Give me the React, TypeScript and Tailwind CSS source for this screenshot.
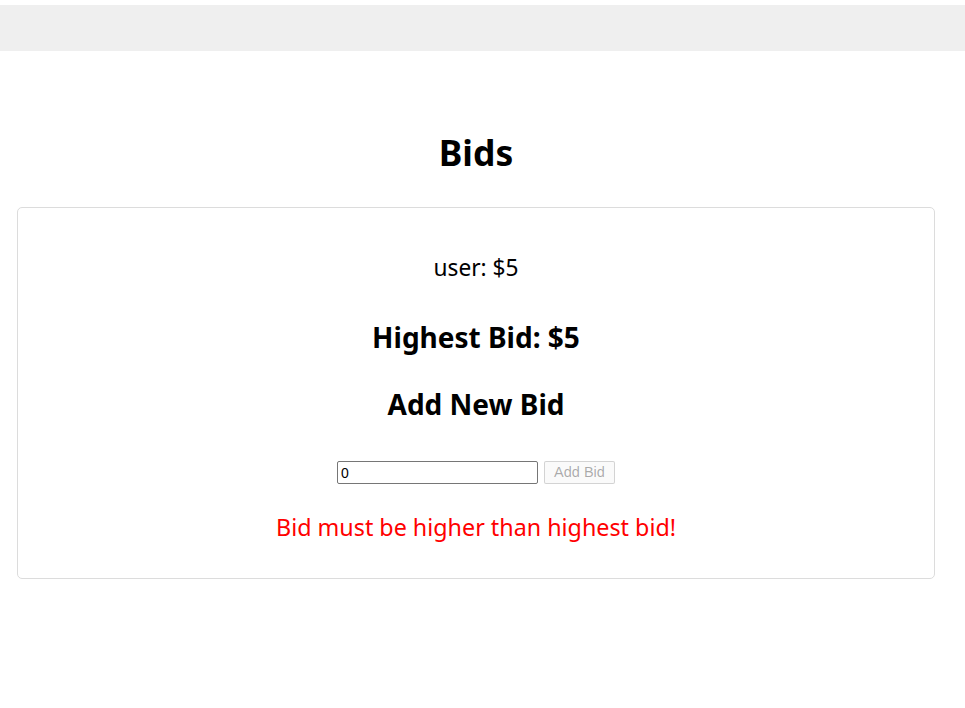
import React from "react";

export default function App() {
  return (
    <div className="min-h-[708px] bg-white pt-[5px] text-black">
      <div className="h-[46px] bg-[#efefef]" />
      <h1 className="mt-[81px] mb-[35px] mr-[13px] text-center text-[35.5px] leading-[40px] font-bold font-['Noto_Sans',sans-serif]">
        Bids
      </h1>
      <div className="ml-[17px] mr-[30px] rounded-[5px] border border-[#dcdcdc] pt-[46px] pb-[37px] text-center font-['Noto_Sans',sans-serif]">
        <p className="text-[22.7px] leading-[28px]">user: $5</p>
        <h2 className="mt-[39px] text-[28px] leading-[32px] font-bold">Highest Bid: $5</h2>
        <h2 className="mt-[35px] text-[28px] leading-[32px] font-bold">Add New Bid</h2>
        <div className="mt-[41px] flex justify-center gap-[6px]">
          <input
            type="number"
            defaultValue={0}
            className="h-[23px] w-[201px] rounded-[2px] border border-[#767676] px-[3px] text-[14px] font-['Liberation_Sans',sans-serif] text-black outline-none"
          />
          <button
            disabled
            className="h-[23px] w-[71px] rounded-[2px] border border-[#767676]/30 bg-[#efefef]/30 text-[14.5px] font-['Liberation_Sans',sans-serif] text-[#101010]/35"
          >
            Add Bid
          </button>
        </div>
        <p className="mt-[29px] text-[23.3px] leading-[28px] text-[#ff0000]">
          Bid must be higher than highest bid!
        </p>
      </div>
    </div>
  );
}
